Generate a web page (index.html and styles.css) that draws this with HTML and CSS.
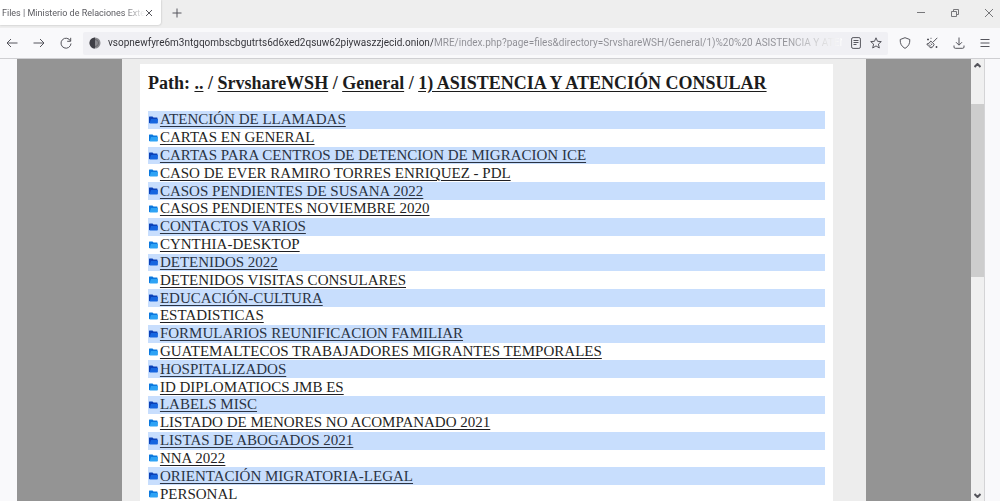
FILE: index.html
```html
<!DOCTYPE html>
<html lang="es">
  <head>
    <meta charset="UTF-8" />
    <meta name="viewport" content="width=device-width, initial-scale=1.0" />
    <title>Files | Ministerio de Relaciones Exteriores</title>
    <link rel="stylesheet" href="styles.css">
  </head>
  <body>
    <svg width="0" height="0" class="defs" aria-hidden="true">
      <symbol id="folder" viewBox="0 0 9 8">
        <path class="back" d="M0 1Q0 .5 .5 .5H3.500L4.500 1.500H8Q8.500 1.500 8.500 2V7H0Z" />
        <path class="front" d="M2 3H9L8.500 7.500H.5Z" />
      </symbol>
    </svg>

    <header class="tabs">
      <div class="tab">
        <span class="tab-title">Files | Ministerio de Relaciones Exte</span>
        <button class="icon-btn close" aria-label="Close tab">
          <svg width="8" height="8" viewBox="0 0 8 8"><path d="M1 1L7 7M7 1L1 7" /></svg>
        </button>
      </div>
      <button class="icon-btn new-tab" aria-label="New tab">
        <svg width="10" height="10" viewBox="0 0 10 10"><path d="M5 .5V9.500M.5 5H9.500" /></svg>
      </button>
      <div class="window-btns">
        <button class="icon-btn" aria-label="Minimize">
          <svg width="8" height="8" viewBox="0 0 8 8"><path d="M0 3.500H8" /></svg>
        </button>
        <button class="icon-btn" aria-label="Restore">
          <svg width="8" height="8" viewBox="0 0 8 8"><path d="M.5 2.500H5.500V7.500H.5ZM2.500 2.500V.5H7.500V5.500H5.500" /></svg>
        </button>
        <button class="icon-btn" aria-label="Close">
          <svg width="8" height="8" viewBox="0 0 8 8"><path d="M0 0L8 8M8 0L0 8" /></svg>
        </button>
      </div>
    </header>

    <nav class="toolbar">
      <div class="nav-btns">
        <button class="icon-btn" aria-label="Back">
          <svg width="12" height="12" viewBox="0 0 12 12"><path d="M11.500 6H1M5 2L1 6L5 10" /></svg>
        </button>
        <button class="icon-btn" aria-label="Forward">
          <svg width="12" height="12" viewBox="0 0 12 12"><path d="M.5 6H11M7 2L11 6L7 10" /></svg>
        </button>
        <button class="icon-btn" aria-label="Reload">
          <svg width="12" height="12" viewBox="0 0 12 12"><path d="M10.500 4A5 5 0 1 0 11 6.500M10.700 .8V4.300H7.200" /></svg>
        </button>
      </div>
      <div class="url-bar">
        <svg class="onion" width="12" height="12" viewBox="0 0 12 12">
          <circle cx="6" cy="6" r="5.500" fill="#8c8c91" />
          <path d="M6 .5A5.500 5.500 0 0 0 6 11.500Z" fill="#3f3f46" />
          <path d="M6 2.500A3.500 3.500 0 0 1 6 9.500" fill="none" stroke="#66666b" />
        </svg>
        <input class="url" type="text" aria-label="Address" value="vsopnewfyre6m3ntgqombscbgutrts6d6xed2qsuw62piywaszzjecid.onion/MRE/index.php?page=files&amp;directory=SrvshareWSH/General/1)%20%20 ASISTENCIA Y ATENCIÓN CONSULAR" />
        <button class="icon-btn" aria-label="Reader view">
          <svg width="10" height="12" viewBox="0 0 10 12"><rect x=".6" y=".6" width="8.800" height="10.800" rx="1.500" /><path d="M2.500 3.500H7.500M2.500 5.500H7.500M2.500 7.500H5.500" /></svg>
        </button>
        <button class="icon-btn" aria-label="Bookmark">
          <svg width="12" height="12" viewBox="0 0 12 12"><path d="M6 .8L7.500 4.300L11.300 4.600L8.400 7.100L9.300 11L6 8.900L2.700 11L3.600 7.100L.7 4.600L4.500 4.300Z" /></svg>
        </button>
      </div>
      <div class="tool-btns">
        <button class="icon-btn" aria-label="Security level">
          <svg width="12" height="12" viewBox="0 0 12 12"><path d="M6 .7L10.800 2.500Q11.200 8.500 6 11.400Q.8 8.500 1.200 2.500Z" /></svg>
        </button>
        <button class="icon-btn" aria-label="New identity">
          <svg width="12" height="12" viewBox="0 0 12 12"><path d="M11.300 .8L7.200 5M4.800 4L8.200 7.300Q7.500 10 5 11Q2.500 9.500 .8 7Q3.500 6.800 4.800 4ZM3 7.500L5 9.500M5 6.500L6 8" /><path d="M2 1.500V3.500M1 2.500H3M10.500 9V11M9.500 10H11.500M5 .8V1.800" /></svg>
        </button>
        <button class="icon-btn" aria-label="Downloads">
          <svg width="12" height="12" viewBox="0 0 12 12"><path d="M6 .5V8M3 5.200L6 8.200L9 5.200M1 8.500V10Q1 11.300 2.300 11.300H9.700Q11 11.300 11 10V8.500" /></svg>
        </button>
        <button class="icon-btn" aria-label="Menu">
          <svg width="10" height="12" viewBox="0 0 10 12"><path d="M.5 2.500H9.500M.5 6H9.500M.5 9.500H9.500" /></svg>
        </button>
      </div>
    </nav>

    <div class="viewport">
      <div class="backdrop">
        <div class="frame">
          <main class="content">
            <h1>Path: <a href="#">..</a> / <a href="#">SrvshareWSH</a> / <a href="#">General</a> / <a href="#">1) ASISTENCIA Y ATENCIÓN CONSULAR</a></h1>
            <ul class="files">
              <li><svg class="folder"><use href="#folder" /></svg><a href="#">ATENCIÓN DE LLAMADAS</a></li>
              <li><svg class="folder"><use href="#folder" /></svg><a href="#">CARTAS EN GENERAL</a></li>
              <li><svg class="folder"><use href="#folder" /></svg><a href="#">CARTAS PARA CENTROS DE DETENCION DE MIGRACION ICE</a></li>
              <li><svg class="folder"><use href="#folder" /></svg><a href="#">CASO DE EVER RAMIRO TORRES ENRIQUEZ - PDL</a></li>
              <li><svg class="folder"><use href="#folder" /></svg><a href="#">CASOS PENDIENTES DE SUSANA 2022</a></li>
              <li><svg class="folder"><use href="#folder" /></svg><a href="#">CASOS PENDIENTES NOVIEMBRE 2020</a></li>
              <li><svg class="folder"><use href="#folder" /></svg><a href="#">CONTACTOS VARIOS</a></li>
              <li><svg class="folder"><use href="#folder" /></svg><a href="#">CYNTHIA-DESKTOP</a></li>
              <li><svg class="folder"><use href="#folder" /></svg><a href="#">DETENIDOS 2022</a></li>
              <li><svg class="folder"><use href="#folder" /></svg><a href="#">DETENIDOS VISITAS CONSULARES</a></li>
              <li><svg class="folder"><use href="#folder" /></svg><a href="#">EDUCACIÓN-CULTURA</a></li>
              <li><svg class="folder"><use href="#folder" /></svg><a href="#">ESTADISTICAS</a></li>
              <li><svg class="folder"><use href="#folder" /></svg><a href="#">FORMULARIOS REUNIFICACION FAMILIAR</a></li>
              <li><svg class="folder"><use href="#folder" /></svg><a href="#">GUATEMALTECOS TRABAJADORES MIGRANTES TEMPORALES</a></li>
              <li><svg class="folder"><use href="#folder" /></svg><a href="#">HOSPITALIZADOS</a></li>
              <li><svg class="folder"><use href="#folder" /></svg><a href="#">ID DIPLOMATIOCS JMB ES</a></li>
              <li><svg class="folder"><use href="#folder" /></svg><a href="#">LABELS MISC</a></li>
              <li><svg class="folder"><use href="#folder" /></svg><a href="#">LISTADO DE MENORES NO ACOMPANADO 2021</a></li>
              <li><svg class="folder"><use href="#folder" /></svg><a href="#">LISTAS DE ABOGADOS 2021</a></li>
              <li><svg class="folder"><use href="#folder" /></svg><a href="#">NNA 2022</a></li>
              <li><svg class="folder"><use href="#folder" /></svg><a href="#">ORIENTACIÓN MIGRATORIA-LEGAL</a></li>
              <li><svg class="folder"><use href="#folder" /></svg><a href="#">PERSONAL</a></li>
            </ul>
          </main>
        </div>
      </div>
      <div class="scrollbar">
        <button class="icon-btn" aria-label="Scroll up">
          <svg width="7" height="5" viewBox="0 0 7 5"><path d="M.5 4L3.500 1L6.500 4" /></svg>
        </button>
        <div class="track"><div class="thumb"></div></div>
        <button class="icon-btn" aria-label="Scroll down">
          <svg width="7" height="5" viewBox="0 0 7 5"><path d="M.5 1L3.500 4L6.500 1" /></svg>
        </button>
      </div>
    </div>
  </body>
</html>
```

FILE: styles.css
```css
* {
  box-sizing: border-box;
  margin: 0;
  padding: 0;
}
body {
  display: flex;
  flex-direction: column;
  height: 100vh;
  overflow: hidden;
  background-color: #f9f9fb;
  font-family: "Liberation Serif", "Times New Roman", serif;
}
.defs {
  position: absolute;
}

/* buttons */
.icon-btn {
  display: flex;
  flex: none;
  align-items: center;
  justify-content: center;
  border: none;
  background: none;
  color: #55555c;
}
.icon-btn svg {
  fill: none;
  stroke: currentColor;
  stroke-linejoin: round;
}

/* tab strip */
.tabs {
  display: flex;
  flex: none;
  height: 28px;
  padding-bottom: 3px;
  background-color: #eeeeee;
}
.tab {
  display: flex;
  align-items: center;
  width: 161px;
  padding: 0 8px 0 2px;
  background-color: #fff;
  border-radius: 0 0 3px 0;
  box-shadow: 0 0 2px #aaa;
}
.tab-title {
  flex: 1;
  white-space: nowrap;
  color: #5b5b60;
  font: 9px/14px Roboto, sans-serif;
  -webkit-mask-image: linear-gradient(to right, #000 85%, transparent);
  mask-image: linear-gradient(to right, #000 85%, transparent);
}
.new-tab {
  margin-left: 10px;
  width: 12px;
}
.window-btns {
  display: flex;
  gap: 26px;
  margin-left: auto;
  padding-right: 7px;
}
.window-btns .icon-btn {
  width: 8px;
  color: #77777a;
}

/* toolbar */
.toolbar {
  display: flex;
  flex: none;
  align-items: center;
  height: 31px;
  border-bottom: 1px solid #cfcfd2;
}
.nav-btns {
  display: flex;
  gap: 15px;
  padding: 0 11px 0 6px;
}
.url-bar {
  display: flex;
  flex: 1;
  align-items: center;
  gap: 9px;
  height: 23px;
  padding: 0 6px;
  background-color: #f0f0f4;
  border-radius: 2px;
}
.onion {
  flex: none;
}
.url {
  flex: 1;
  min-width: 0;
  margin-left: -2px;
  border: none;
  outline: none;
  color: transparent;
  font: 10px/16px Roboto, sans-serif;
  background-image: linear-gradient(to right, #303036 325px, #8e8e94 325px, #8e8e94 92%, transparent);
  -webkit-background-clip: text;
  background-clip: text;
}
.tool-btns {
  display: flex;
  gap: 15px;
  padding: 0 10px 0 11px;
}

/* page */
.viewport {
  display: flex;
  flex: 1;
  min-height: 0;
  padding: 0 15px 0 17px;
}
.backdrop {
  display: flex;
  flex: 1;
  justify-content: center;
  background-color: #949494;
}
.frame {
  display: flex;
  width: 78%;
  padding: 5px 33px 0 18px;
  background-color: #ededed;
}
.content {
  display: flex;
  flex: 1;
  flex-direction: column;
  padding: 8px 8px 0;
  background-color: #fff;
}
.content a {
  color: inherit;
  text-underline-offset: 2px;
}
h1 {
  margin-bottom: 17px;
  color: #1c1c1c;
  font-size: 18px;
  line-height: 22px;
}
.files {
  display: grid;
  flex: 1;
  grid-auto-rows: 1fr;
  margin-bottom: -2px;
  color: #1f1f24;
  font-size: 15px;
  line-height: 17px;
  list-style: none;
}
.files li {
  --back: #0b78de;
  --front: #2ea3f5;
  display: flex;
  align-items: center;
  gap: 2px;
  padding-left: 1px;
}
.files li:nth-child(odd) {
  --back: #0a41b8;
  --front: #1666e0;
  background-color: #c8defd;
  color: #2b3444;
}
.folder {
  flex: none;
  width: 9px;
  height: 8px;
}
.back {
  fill: var(--back);
}
.front {
  fill: var(--front);
}

/* scrollbar */
.scrollbar {
  display: flex;
  flex: none;
  flex-direction: column;
  width: 14px;
  background-color: #f0f0f0;
  border-right: 1px solid #d4d4d6;
}
.scrollbar .icon-btn {
  height: 12px;
}
.scrollbar svg {
  stroke-width: 2;
}
.track {
  flex: 1;
  padding-top: 33px;
}
.thumb {
  height: 45%;
  background-color: #cdcdcd;
}
```
